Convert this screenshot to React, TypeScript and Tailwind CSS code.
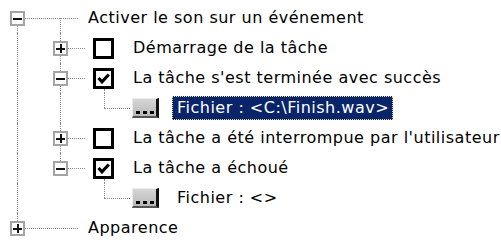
const dot = "border-[#8a8a8a] border-dotted";

function Expander({ open }: { open: boolean }) {
  return (
    <div className="w-[15px] h-[15px] shrink-0 border-2 border-[#a4a4a4] bg-white flex items-center justify-center relative">
      <div className="w-[9px] h-[2px] bg-[#111]" />
      {!open && <div className="absolute w-[2px] h-[9px] bg-[#111]" />}
    </div>
  );
}

function Check({ checked }: { checked: boolean }) {
  return (
    <div className="w-[21px] h-[21px] shrink-0 border-[3px] border-black bg-white flex items-center justify-center">
      {checked && (
        <svg width="13" height="11" viewBox="0 0 13 11">
          <path d="M1.5 5 L5 8.8 L11.8 1.5" fill="none" stroke="black" strokeWidth="3.2" />
        </svg>
      )}
    </div>
  );
}

// column holding a vertical guide line
function VLine({ w, x, on = true }: { w: number; x: number; on?: boolean }) {
  return (
    <div className="h-full shrink-0" style={{ width: w }}>
      {on && <div className={`h-full border-l ${dot}`} style={{ marginLeft: x }} />}
    </div>
  );
}

// expander node: line up, box, line down, horizontal line out to the label
function Node({ w, x, up, down, open, hEnd }: { w: number; x: number; up: boolean; down: boolean; open: boolean; hEnd: number }) {
  return (
    <div className="h-full shrink-0 flex flex-col" style={{ width: w }}>
      <div className="h-[8px]">{up && <div className={`h-full border-l ${dot}`} style={{ marginLeft: x }} />}</div>
      <div className="h-[15px] flex items-center">
        <div style={{ marginLeft: x - 7 }}>
          <Expander open={open} />
        </div>
        <div className={`border-t ${dot}`} style={{ width: hEnd - x - 8 }} />
      </div>
      <div className="flex-1">{down && <div className={`h-full border-l ${dot}`} style={{ marginLeft: x }} />}</div>
    </div>
  );
}

function Label({ children }: { children: string }) {
  return <span className="leading-[30px] whitespace-nowrap">{children}</span>;
}

function TaskRow({ label, checked, open, last, expanded }: { label: string; checked: boolean; open: boolean; last?: boolean; expanded?: boolean }) {
  return (
    <div className="h-[30px] flex">
      <VLine w={40} x={17} />
      <Node w={53} x={20} up down={!last} open={open} hEnd={45} />
      <div className="h-full w-[40px] shrink-0 flex flex-col pt-[5px]">
        <Check checked={checked} />
        {expanded && <div className={`flex-1 border-l ${dot} ml-[11px]`} />}
      </div>
      <Label>{label}</Label>
    </div>
  );
}

function FileRow({ value, selected, cont }: { value: string; selected?: boolean; cont: boolean }) {
  return (
    <div className="h-[30px] flex">
      <VLine w={40} x={17} />
      <VLine w={53} x={20} on={cont} />
      <div className="h-full w-[39px] shrink-0 flex flex-col">
        <div className={`h-[15px] border-l ${dot} ml-[11px]`} />
        <div className={`border-t ${dot} ml-[11px] w-[26px]`} />
      </div>
      <div className="h-full w-[40px] shrink-0 flex items-center">
        <div className="w-[27px] h-[20px] bg-gradient-to-b from-[#d6d6d6] to-[#b8b8b8] border-t border-l border-[#ececec] border-r-[3px] border-b-2 border-r-[#111] border-b-[#555] flex items-end justify-center pb-[2px]">
          <div className="flex gap-[3px]">
            <div className="w-[4px] h-[3px] bg-black" />
            <div className="w-[4px] h-[3px] bg-black" />
            <div className="w-[4px] h-[3px] bg-black" />
          </div>
        </div>
      </div>
      <div className="h-full flex items-center">
        {selected ? (
          <span className="bg-[#0a246a] text-white pl-[4px] pr-[3px] h-[24px] leading-[22px] border border-dotted border-[#f2dc9a] whitespace-nowrap">
            {value}
          </span>
        ) : (
          <span className="pl-[5px] leading-[30px] whitespace-nowrap">{value}</span>
        )}
      </div>
    </div>
  );
}

export default function App() {
  return (
    <div
      className="w-[501px] h-[242px] bg-white text-black overflow-hidden text-[16px] tracking-[0.5px] pt-[3px]"
      style={{ fontFamily: '"DejaVu Sans", Tahoma, sans-serif' }}
    >
      {/* root: expanded */}
      <div className="h-[30px] flex">
        <div className="h-full w-[25px] shrink-0 flex flex-col">
          <div className="h-[8px]" />
          <div className="h-[15px] pl-[10px]">
            <Expander open />
          </div>
          <div className={`flex-1 border-l ${dot} ml-[17px]`} />
        </div>
        <div className="h-full w-[35px] shrink-0 flex flex-col">
          <div className="h-[15px]" />
          <div className={`border-t ${dot}`} />
        </div>
        <div className="h-full w-[18px] shrink-0 flex flex-col">
          <div className="h-[15px]" />
          <div className={`flex-1 border-t border-l ${dot}`} />
        </div>
        <div className="w-[10px] shrink-0" />
        <Label>Activer le son sur un événement</Label>
      </div>
      <TaskRow label="Démarrage de la tâche" checked={false} open={false} />
      <TaskRow label="La tâche s'est terminée avec succès" checked open expanded />
      <FileRow value="Fichier : <C:\Finish.wav>" selected cont />
      <TaskRow label="La tâche a été interrompue par l'utilisateur" checked={false} open={false} />
      <TaskRow label="La tâche a échoué" checked open last expanded />
      <FileRow value="Fichier : <>" cont={false} />
      <div className="h-[30px] flex">
        <Node w={88} x={17} up down={false} open={false} hEnd={78} />
        <Label>Apparence</Label>
      </div>
    </div>
  );
}
